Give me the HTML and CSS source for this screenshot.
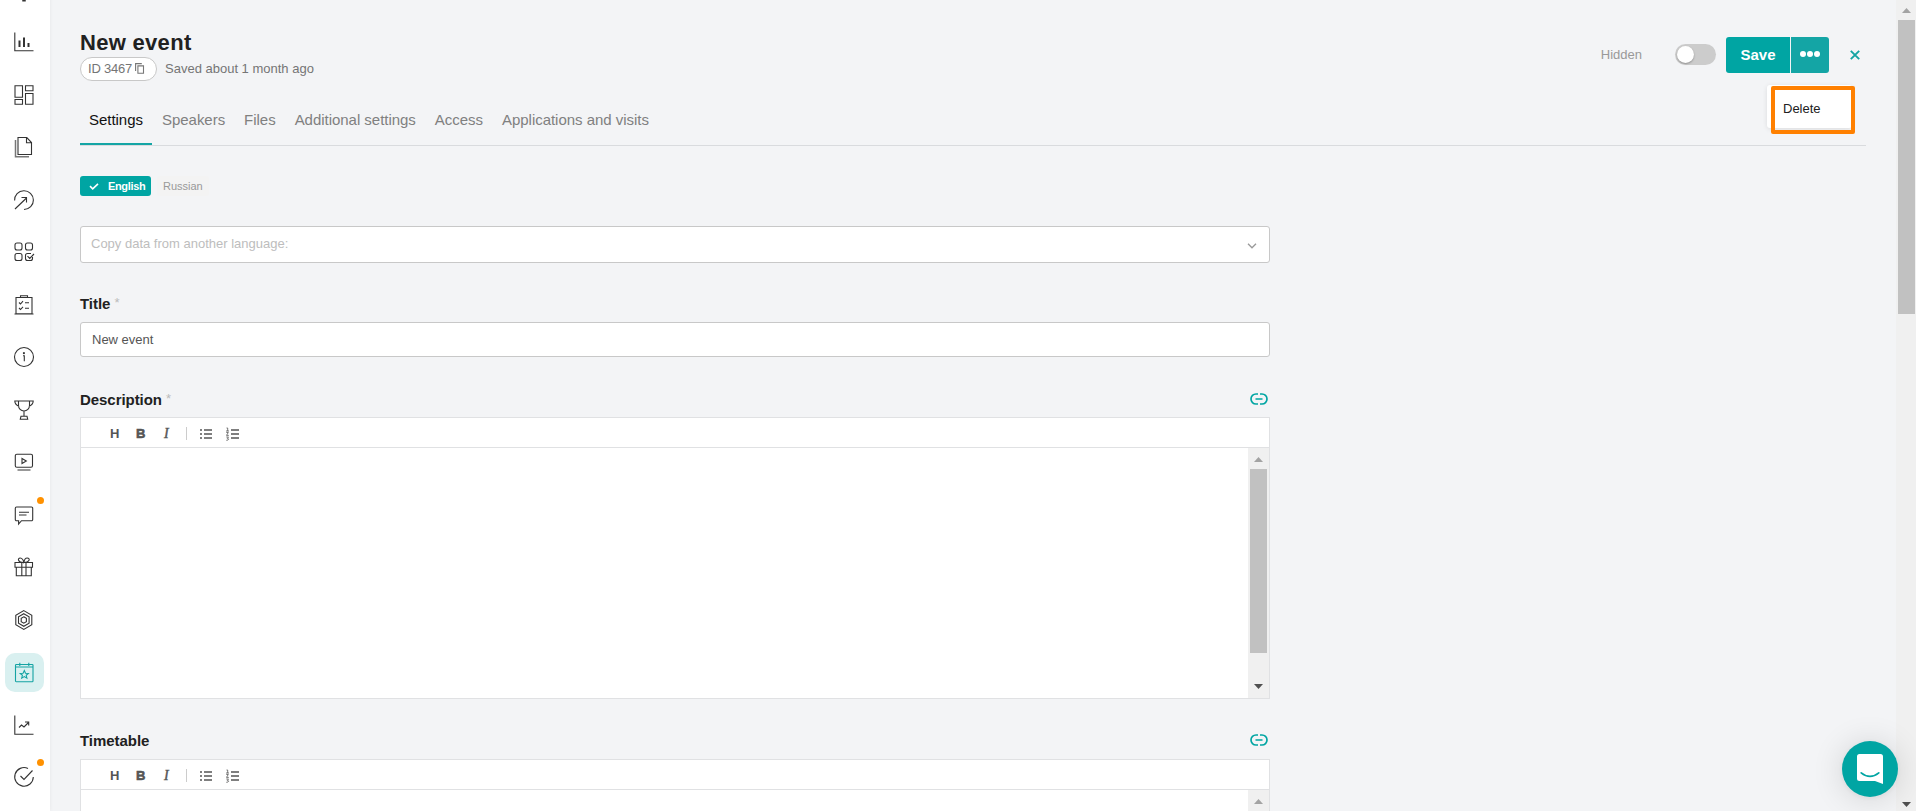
FILE: index.html
```
<!DOCTYPE html>
<html lang="en">
<head>
    <meta charset="UTF-8">
    <title>New event</title>
    <meta name="viewport" content="width=device-width, initial-scale=1">
    <link rel="stylesheet" href="styles.css">
</head>
<body>
<!-- shared icons -->
<svg class="sprite">
    <symbol id="ico-link" viewBox="0 0 18 12">
        <path d="M8 1H6a5 5 0 0 0 0 10h2M10 1h2a5 5 0 0 1 0 10h-2M5.500 6h7" fill="none" stroke="#00a5a3" stroke-width="1.700"/>
    </symbol>
    <symbol id="ico-ul" viewBox="0 0 12 12">
        <path d="M0 2h2M0 6h2M0 10h2M4 2h8M4 6h8M4 10h8" stroke="#555" stroke-width="1.600"/>
    </symbol>
    <symbol id="ico-ol" viewBox="0 0 13 14">
        <path d="M5 3h8M5 7h8M5 11h8" stroke="#555" stroke-width="1.700"/>
        <path d="M.5 1h1.200v3M0 4h3M.3 5.500h2L.5 8.400h2.300M.3 10h2.200l-1.200 1.400q1.300 0 1.300.9T.3 13.300" fill="none" stroke="#555" stroke-width=".8"/>
    </symbol>
</svg>

<div class="layout">
    <nav class="sidebar">
        <a class="nav-item"><svg viewBox="0 0 20 20"><path d="M10 10v11.500" stroke-width="3.500"/></svg></a>
        <a class="nav-item"><svg viewBox="0 0 20 20"><path d="M.8.500v18.200h18.700"/><path d="M5.500 15V8.500M10 15V5.500M14.500 15v-4" stroke-width="2"/></svg></a>
        <a class="nav-item"><svg viewBox="0 0 20 20"><path d="M1 .8h7.500v11.400H1zM11.500.8H19v5h-7.500zM1 14.500h7.500v4.700H1zM11.500 8.500H19v10.700h-7.500z"/></svg></a>
        <a class="nav-item"><svg viewBox="0 0 20 20"><path d="M4 .5h8.800l4.700 5v12H4zM12.500.5v5.200h5"/><path d="M1.500 3v16.700H15" class="soft"/></svg></a>
        <a class="nav-item"><svg viewBox="0 0 20 20"><path d="M.6 10.500a9.400 9.400 0 1 1 9.400 9M1 19L12.500 8M7.500 7.500h5v5"/></svg></a>
        <a class="nav-item"><svg viewBox="0 0 20 20"><rect x="1" y="1" width="7" height="7" rx="2"/><rect x="11.500" y="1" width="7" height="7" rx="2"/><rect x="1" y="11.500" width="7" height="7" rx="2"/><path d="M18.500 15v1.500a2 2 0 0 1-2 2h-3a2 2 0 0 1-2-2v-3a2 2 0 0 1 2-2H17M13.500 14.200l2.200 2.200L20 12"/></svg></a>
        <a class="nav-item"><svg viewBox="0 0 20 20"><path d="M2 2.500h16v16.300H2zM.5 19h19M6.500 2.500V.7h7v1.800M5 7.500l1.500 1.500 2.500-2.800M11 7.800h4M5 13l1.500 1.500L9 11.800M11 13.300h4"/></svg></a>
        <a class="nav-item"><svg viewBox="0 0 20 20"><circle cx="10" cy="10" r="9.500"/><path d="M9 8.800h1.300v5.500"/><path d="M9.900 5.200v1.900" stroke-width="1.900"/></svg></a>
        <a class="nav-item"><svg viewBox="0 0 20 20"><path d="M4.500 1h11v4.500a5.500 5.500 0 0 1-11 0zM4.500 1H.8c0 2.800 1 4 4.300 5.500M15.500 1h3.700c0 2.800-1 4-4.300 5.500M10 11v5M6.300 19.200l.7-3h6l.7 3z"/></svg></a>
        <a class="nav-item"><svg viewBox="0 0 20 20"><rect x="1.300" y="2.300" width="17.200" height="13" rx="1.500"/><path d="M8 6.500v5l4.300-2.500zM3.500 18h13"/></svg></a>
        <a class="nav-item"><svg viewBox="0 0 20 20"><path d="M2.500 2h15a1.200 1.200 0 0 1 1.200 1.200v11.300a1.200 1.200 0 0 1-1.200 1.200H7.500L4.600 19v-3.300H2.500a1.200 1.200 0 0 1-1.200-1.200V3.200A1.200 1.200 0 0 1 2.500 2zM5 7.200h10M5 10h7.500"/></svg><i class="dot"></i></a>
        <a class="nav-item"><svg viewBox="0 0 20 20"><path d="M1 5.500h17.500v4.700H1zM2.300 10.200h15v8.500h-15zM7.800 5.500v13.200M12 5.500v13.200M9.700 5.500c-6 0-6.500-4.500-3.500-4.500 2 0 3.500 2.500 3.500 4.500s0-4.500 3.500-4.500 2.500 4.500-3.500 4.500"/></svg></a>
        <a class="nav-item"><svg viewBox="0 0 20 20"><path d="M9.800.6l8 4.700v9.400l-8 4.700-8-4.700V5.300z"/><path d="M9.800 3.700l5.300 3.100v6.400l-5.300 3.100-5.300-3.100V6.800z"/><path d="M9.800 6.800l2.600 1.600v3.200l-2.600 1.600-2.600-1.600V8.400z"/></svg></a>
        <a class="nav-item active"><svg viewBox="0 0 20 20"><rect x="1" y="2" width="17.500" height="17.200" rx=".8"/><path d="M1 4.500h17.500M5.300.3v3.200M14.300.3v3.200M9.800 8l1.200 2.700 2.900.2-2.200 1.900.7 2.900-2.600-1.600-2.600 1.600.7-2.900-2.200-1.900 2.900-.2z"/></svg></a>
        <a class="nav-item"><svg viewBox="0 0 20 20"><path d="M.8.500v18.700h18.700M5 12.500l2.500-2.500 2.500 2 4.500-4.500M11 7h3.700v3.500"/></svg></a>
        <a class="nav-item"><svg viewBox="0 0 20 20"><path d="M14 1.500A9.300 9.300 0 1 0 19.300 10M6.500 9l3.500 3.500 8.500-9"/></svg><i class="dot"></i></a>
    </nav>

    <main class="content">
        <header class="header">
            <div class="header-info">
                <h1>New event</h1>
                <div class="meta">
                    <span class="id-badge">ID 3467
                        <svg width="10" height="11" viewBox="0 0 10 11"><path d="M.6 8V.6h6.200M2.900 2.900h5.600v7.400H2.900z" fill="none" stroke="#777" stroke-width="1.100"/></svg>
                    </span>
                    <span class="saved">Saved about 1 month ago</span>
                </div>
            </div>
            <div class="actions">
                <span class="status">Hidden</span>
                <span class="toggle"></span>
                <div class="btn-group">
                    <button class="btn-save">Save</button>
                    <button class="btn-more"><i></i><i></i><i></i></button>
                    <div class="dropdown">Delete</div>
                    <div class="highlight"></div>
                </div>
                <svg class="close" width="10" height="10" viewBox="0 0 10 10"><path d="M.8.800l8.400 8.400M9.200.800L.8 9.200" stroke="#14a3a3" stroke-width="1.900"/></svg>
            </div>
        </header>

        <div class="tabs">
            <a class="tab active">Settings</a>
            <a class="tab">Speakers</a>
            <a class="tab">Files</a>
            <a class="tab">Additional settings</a>
            <a class="tab">Access</a>
            <a class="tab">Applications and visits</a>
        </div>

        <div class="form">
            <div class="langs">
                <span class="lang active"><svg width="10" height="7" viewBox="0 0 10 7"><path d="M1 3.200l2.700 2.600L9 .8" fill="none" stroke="#fff" stroke-width="1.600"/></svg>English</span>
                <span class="lang">Russian</span>
            </div>

            <div class="select">
                <span>Copy data from another language:</span>
                <svg width="10" height="6" viewBox="0 0 10 6"><path d="M1 .8l4 4 4-4" fill="none" stroke="#999" stroke-width="1.300"/></svg>
            </div>

            <div class="label label-title"><span>Title <sup>*</sup></span></div>
            <div class="input">New event</div>

            <div class="label label-editor"><span>Description <sup>*</sup></span><svg width="18" height="12"><use href="#ico-link"/></svg></div>
            <div class="editor">
                <div class="toolbar">
                    <b class="tool-h">H</b><b class="tool-b">B</b><i class="tool-i">I</i><span class="sep"></span>
                    <svg class="tool-ul" width="12" height="12"><use href="#ico-ul"/></svg>
                    <svg class="tool-ol" width="13" height="14"><use href="#ico-ol"/></svg>
                </div>
                <div class="editor-body">
                    <div class="scroll"><i class="arrow up"></i><div class="thumb"></div><i class="arrow down"></i></div>
                </div>
            </div>

            <div class="label label-timetable"><span>Timetable</span><svg width="18" height="12"><use href="#ico-link"/></svg></div>
            <div class="editor">
                <div class="toolbar">
                    <b class="tool-h">H</b><b class="tool-b">B</b><i class="tool-i">I</i><span class="sep"></span>
                    <svg class="tool-ul" width="12" height="12"><use href="#ico-ul"/></svg>
                    <svg class="tool-ol" width="13" height="14"><use href="#ico-ol"/></svg>
                </div>
                <div class="editor-body">
                    <div class="scroll"><i class="arrow up"></i><div class="thumb"></div><i class="arrow down"></i></div>
                </div>
            </div>
        </div>
    </main>

    <div class="page-scroll"><i class="arrow up"></i><div class="thumb"></div><i class="arrow down"></i></div>
</div>

<div class="chat">
    <svg width="26" height="30" viewBox="0 0 26 30"><path d="M2.500 0h21A2.500 2.500 0 0 1 26 2.500V30l-8-3H2.500A2.500 2.500 0 0 1 0 24.500v-22A2.500 2.500 0 0 1 2.500 0z" fill="#fff"/><path d="M4.200 18.800q8.800 7.200 17.600 0" fill="none" stroke="#00a5a3" stroke-width="1.700" stroke-linecap="round"/></svg>
</div>
</body>
</html>
```
FILE: styles.css
```
*, *:before, *:after {
    box-sizing: border-box;
    padding: 0;
    margin: 0;
}

body {
    background: #f3f4f6;
    overflow: hidden;
    font-family: "Liberation Sans", Arial, sans-serif;
    font-size: 13px;
    color: #212121;
}

.sprite {
    display: none;
}

.layout {
    display: flex;
    height: 100vh;
    overflow: hidden;
}

/* Sidebar */
.sidebar {
    flex: 0 0 50px;
    background: #fff;
    box-shadow: 0 0 4px rgba(0, 0, 0, 0.06);
    margin-top: -36.5px;
    padding-right: 2px;
}

.nav-item {
    position: relative;
    display: flex;
    align-items: center;
    justify-content: center;
    height: 52.5px;
}

.nav-item svg {
    width: 20px;
    height: 20px;
    fill: none;
    stroke: #333;
    stroke-width: 1.1;
    overflow: visible;
}

.nav-item .soft {
    stroke: #777;
    stroke-width: 1.5;
}

.nav-item.active svg {
    width: 39px;
    height: 39px;
    padding: 9.5px;
    border-radius: 10px;
    background: #d9f0f0;
    stroke: #14a3a3;
}

.dot {
    position: absolute;
    top: 8px;
    right: 4.5px;
    width: 7px;
    height: 7px;
    border-radius: 50%;
    background: #ff9100;
}

/* Header */
.content {
    flex: 1;
    padding: 27px 30px 0;
}

.header {
    display: flex;
    justify-content: space-between;
    height: 67px;
}

h1 {
    height: 30px;
    font-size: 22px;
    line-height: 32px;
    letter-spacing: 0.3px;
}

.meta {
    display: flex;
    align-items: center;
    gap: 8px;
    color: #757575;
}

.saved {
    padding-bottom: 2px;
}

.id-badge {
    display: flex;
    align-items: center;
    gap: 3px;
    width: 77px;
    height: 24px;
    padding: 0 0 2px 7px;
    border: 1px solid #c8c8c8;
    border-radius: 12px;
    background: #fff;
    letter-spacing: -0.2px;
    white-space: nowrap;
}

.actions {
    display: flex;
    align-items: center;
    height: 36px;
    margin: 10px 6px 0 0;
}

.status {
    color: #999;
    margin-right: 33px;
    padding-bottom: 2px;
}

.toggle {
    width: 41px;
    height: 21px;
    padding: 2px;
    margin: 0 10px 1px 0;
    border-radius: 11px;
    background: #ccc;
}

.toggle:before {
    content: "";
    display: block;
    width: 17px;
    height: 17px;
    border-radius: 50%;
    background: #fff;
    box-shadow: 0 1px 2px rgba(0, 0, 0, 0.3);
}

.btn-group {
    position: relative;
    display: flex;
    gap: 1px;
    margin-right: 21px;
}

.btn-group button {
    height: 36px;
    border: 0;
    color: #fff;
    font: bold 15px "Liberation Sans", Arial, sans-serif;
}

.btn-save {
    width: 64px;
    padding-bottom: 1px;
    border-radius: 3px 0 0 3px;
    background: #00a5a3;
}

.btn-more {
    display: flex;
    justify-content: center;
    gap: 1px;
    width: 38px;
    padding-top: 14px;
    border-radius: 0 3px 3px 0;
    background: #14a5a5;
}

.btn-more i {
    width: 6px;
    height: 6px;
    border-radius: 50%;
    background: #fff;
}

.dropdown {
    position: absolute;
    top: 48px;
    left: 41px;
    width: 85px;
    height: 43px;
    padding-left: 16px;
    border-radius: 3px;
    background: #fff;
    box-shadow: 0 1px 5px rgba(0, 0, 0, 0.1);
    line-height: 48px;
}

.highlight {
    position: absolute;
    top: 49px;
    left: 45px;
    width: 84px;
    height: 48px;
    border: 4px solid #ff8000;
    border-radius: 2px;
}

/* Tabs */
.tabs {
    display: flex;
    gap: 1px;
    height: 52px;
    border-bottom: 1px solid #d9dbde;
}

.tab {
    height: 51px;
    padding: 0 9px;
    color: #808080;
    font-size: 15px;
    line-height: 52px;
    letter-spacing: -0.03px;
}

.tab.active {
    color: #111;
    border-bottom: 2px solid #14a5a5;
}

/* Form */
.form {
    width: 1190px;
    padding-top: 30px;
}

.langs {
    display: flex;
    gap: 6px;
    margin-bottom: 30px;
}

.lang {
    display: flex;
    align-items: center;
    height: 20px;
    padding: 0 6px;
    border-radius: 3px;
    background: #f3f3f3;
    color: #999;
    font-size: 11px;
}

.lang.active {
    width: 71px;
    padding: 0 0 0 9px;
    background: #00a5a3;
    color: #fff;
    font-weight: bold;
    letter-spacing: -0.35px;
}

.lang svg {
    flex-shrink: 0;
    margin-right: 9px;
}

.select,
.input {
    display: flex;
    align-items: center;
    border: 1px solid #c8c8c8;
    border-radius: 3px;
    background: #fff;
}

.select {
    justify-content: space-between;
    height: 37px;
    padding: 0 12px 3px 10px;
    color: #bdbdbd;
}

.select svg {
    margin-top: 6px;
}

.input {
    height: 35px;
    padding-left: 11px;
    color: #555;
}

.label {
    display: flex;
    align-items: center;
    justify-content: space-between;
    height: 20px;
    padding-right: 2px;
    font-size: 15px;
    font-weight: bold;
    letter-spacing: -0.05px;
}

.label sup {
    color: #bbb;
    font-size: 13px;
    font-weight: normal;
    line-height: 0;
    vertical-align: 2px;
}

.label-title {
    margin: 30px 0 9px;
}

.label-editor {
    margin: 32px 0 8px;
}

.label-timetable {
    margin: 31px 0 9px;
}

/* Text editor */
.editor {
    height: 282px;
    border: 1px solid #e0e1e3;
    background: #fff;
}

.toolbar {
    display: flex;
    align-items: center;
    height: 30px;
    padding: 2px 0 0 29px;
    border-bottom: 1px solid #e0e1e3;
    color: #555;
    font-size: 13px;
}

.tool-h {
    width: 26px;
}

.tool-b {
    width: 28px;
    -webkit-text-stroke: 0.6px #555;
}

.tool-i {
    width: 22px;
    font-family: "Liberation Serif", serif;
    font-size: 14px;
    -webkit-text-stroke: 0.4px #555;
}

.sep {
    width: 1px;
    height: 13px;
    margin-right: 13px;
    background: #ccc;
}

.tool-ul {
    margin-right: 14px;
}

.editor-body {
    display: flex;
    justify-content: flex-end;
    height: 250px;
}

/* Scrollbars */
.scroll,
.page-scroll {
    display: flex;
    flex-direction: column;
    align-items: center;
    background: #f0f0f0;
}

.scroll {
    width: 21px;
    padding: 9px 0;
}

.thumb {
    width: 17px;
    background: #c1c1c1;
}

.scroll .thumb {
    height: 184px;
    margin-top: 7px;
}

.arrow {
    width: 9px;
    height: 5px;
    background: #505050;
}

.arrow.up {
    background: #a3a3a3;
    clip-path: polygon(50% 0, 100% 100%, 0 100%);
}

.arrow.down {
    margin-top: auto;
    clip-path: polygon(0 0, 100% 0, 50% 100%);
}

.page-scroll {
    flex: 0 0 20px;
    padding: 8px 0 4px 1px;
}

.page-scroll .thumb {
    height: 294px;
    margin-top: 7px;
}

/* Chat launcher */
.chat {
    position: fixed;
    right: 18px;
    bottom: 14px;
    display: flex;
    align-items: center;
    justify-content: center;
    width: 56px;
    height: 56px;
    border-radius: 50%;
    background: #00a5a3;
    box-shadow: 0 1px 6px rgba(0, 0, 0, 0.06), 0 2px 32px rgba(0, 0, 0, 0.14);
}
```
